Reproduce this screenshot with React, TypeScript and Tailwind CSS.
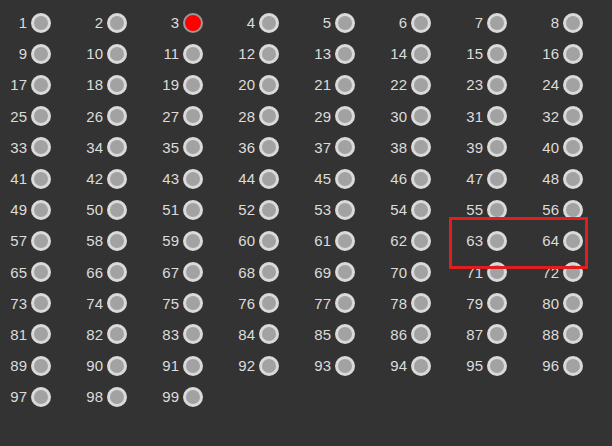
const active = 3;

const Led = ({ on }: { on: boolean }) =>
  on ? (
    <span className="block h-5 w-5 rounded-full border-2 border-[#9a9a9a] bg-[#ff0000]" />
  ) : (
    <span className="block h-5 w-5 rounded-full border-[3px] border-[#dadada] bg-[#a2a2a2]" />
  );

export default function App() {
  const items = Array.from({ length: 99 }, (_, i) => i + 1);

  return (
    <div className="relative h-[446px] w-[612px] overflow-hidden bg-[#333333] font-['Liberation_Sans',Arial,sans-serif]">
      <div className="grid grid-cols-[repeat(8,76px)] auto-rows-[31.2px] pl-[2px] pt-[7px]">
        {items.map((n) => (
          <div key={n} className="flex items-center">
            <span className="w-[25px] text-right text-[15px] leading-none text-[#dcdcdc]">{n}</span>
            <span className="ml-[4px]">
              <Led on={n === active} />
            </span>
          </div>
        ))}
      </div>

      {/* highlight */}
      <div className="absolute left-[449px] top-[217px] h-[52px] w-[139px] border-[3px] border-[#e11d1d]" />
    </div>
  );
}
